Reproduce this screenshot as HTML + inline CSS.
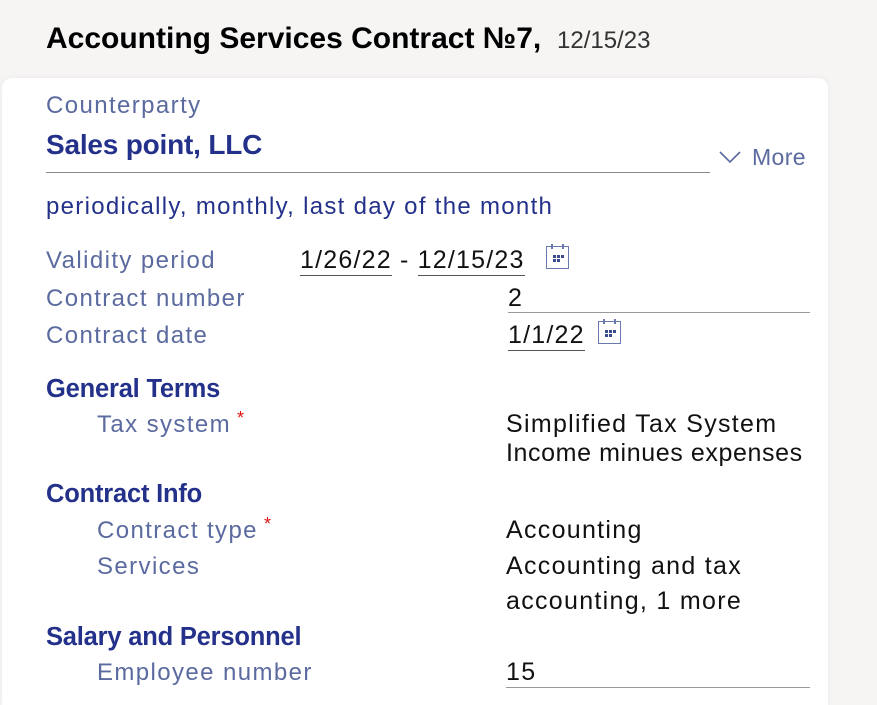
<!DOCTYPE html>
<html><head><meta charset="utf-8"><style>
html,body{margin:0;padding:0;overflow:hidden}
body{width:877px;height:705px;background:#f6f5f4;position:relative;overflow:hidden;font-family:"Liberation Sans",sans-serif}
.card{position:absolute;left:2px;top:78px;width:826px;height:627px;background:#fff;border-radius:10px 10px 0 0;box-shadow:0 0 6px rgba(0,0,0,0.06)}
.t{position:absolute;line-height:1;white-space:nowrap}
.lbl{color:#5b6a9f;font-size:24px;letter-spacing:1.4px}
.h{color:#24318a;font-size:25.5px;font-weight:bold;letter-spacing:-0.2px}
.v{color:#111;font-size:25px;letter-spacing:1.3px}
.star{color:#e01010;font-size:18px;position:relative;top:-8px;margin-left:6px}
.ul{position:absolute;height:1px;background:#999}
.u{border-bottom:1px solid #555;padding-bottom:1px}
</style></head><body>
<div class="t" style="left:46px;top:24px;font-size:30px;font-weight:bold;color:#000;letter-spacing:0px">Accounting Services Contract №7,</div>
<div class="t" style="left:557px;top:29px;font-size:24px;color:#333">12/15/23</div>
<div class="card"></div>
<div class="t lbl" style="left:46px;top:94px;font-size:24px">Counterparty</div>
<div class="t h" style="left:46px;top:131px;font-size:28px">Sales point, LLC</div>
<div class="ul" style="left:46px;top:172px;width:664px;background:#888"></div>
<svg style="position:absolute;left:719px;top:150px" width="22" height="14"><path d="M1 2 L11 12 L21 2" fill="none" stroke="#5b6a9f" stroke-width="1.6"/></svg>
<div class="t lbl" style="left:752px;top:146px;font-size:23px;letter-spacing:0.4px">More</div>
<div class="t" style="left:46px;top:195px;font-size:24px;color:#24318a;letter-spacing:1.3px">periodically, monthly, last day of the month</div>

<div class="t lbl" style="left:46px;top:249px">Validity period</div>
<div class="t v" style="left:300px;top:248px;letter-spacing:1.2px"><span class="u">1/26/22</span> - <span class="u">12/15/23</span></div>
<svg style="position:absolute;left:545px;top:243px" width="26" height="28"><rect x="1.5" y="3.5" width="22" height="22" fill="#fff" stroke="#6a78b0"/><rect x="6" y="1" width="2" height="5" fill="#6a78b0"/><rect x="17" y="1" width="2" height="5" fill="#6a78b0"/><g fill="#3a4a90"><rect x="8" y="12" width="3" height="3"/><rect x="12" y="12" width="3" height="3"/><rect x="16" y="12" width="3" height="3"/><rect x="8" y="16" width="3" height="3"/><rect x="12" y="16" width="3" height="3"/></g></svg>

<div class="t lbl" style="left:46px;top:287px">Contract number</div>
<div class="t v" style="left:508px;top:286px">2</div>
<div class="ul" style="left:508px;top:312px;width:302px"></div>

<div class="t lbl" style="left:46px;top:324px">Contract date</div>
<div class="t v" style="left:508px;top:323px;letter-spacing:1.2px"><span class="u">1/1/22</span></div>
<svg style="position:absolute;left:597px;top:318px" width="26" height="28"><rect x="1.5" y="3.5" width="22" height="22" fill="#fff" stroke="#6a78b0"/><rect x="6" y="1" width="2" height="5" fill="#6a78b0"/><rect x="17" y="1" width="2" height="5" fill="#6a78b0"/><g fill="#3a4a90"><rect x="8" y="12" width="3" height="3"/><rect x="12" y="12" width="3" height="3"/><rect x="16" y="12" width="3" height="3"/><rect x="8" y="16" width="3" height="3"/><rect x="12" y="16" width="3" height="3"/></g></svg>

<div class="t h" style="left:46px;top:377px">General Terms</div>
<div class="t lbl" style="left:97px;top:413px">Tax system<span class="star">*</span></div>
<div class="t v" style="left:506px;top:412px">Simplified Tax System</div>
<div class="t v" style="left:506px;top:441px;letter-spacing:0.6px">Income minues expenses</div>

<div class="t h" style="left:46px;top:482px">Contract Info</div>
<div class="t lbl" style="left:97px;top:519px">Contract type<span class="star">*</span></div>
<div class="t v" style="left:506px;top:518px">Accounting</div>
<div class="t lbl" style="left:97px;top:555px">Services</div>
<div class="t v" style="left:506px;top:554px">Accounting and tax</div>
<div class="t v" style="left:506px;top:589px">accounting, 1 more</div>

<div class="t h" style="left:46px;top:625px">Salary and Personnel</div>
<div class="t lbl" style="left:97px;top:661px">Employee number</div>
<div class="t v" style="left:506px;top:660px">15</div>
<div class="ul" style="left:506px;top:687px;width:304px"></div>
</body></html>
